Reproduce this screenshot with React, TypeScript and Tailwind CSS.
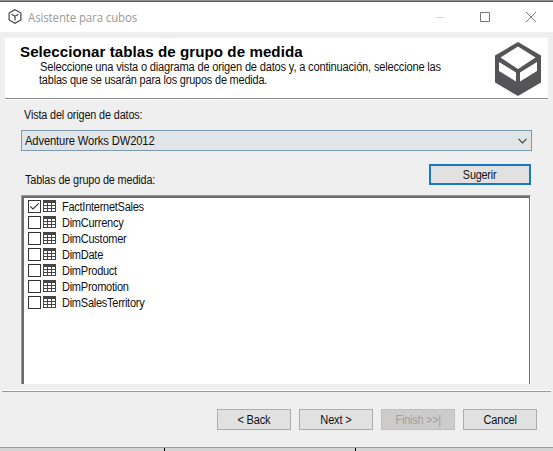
const tables = [
  'FactInternetSales',
  'DimCurrency',
  'DimCustomer',
  'DimDate',
  'DimProduct',
  'DimPromotion',
  'DimSalesTerritory',
];

function TableIcon() {
  return (
    <svg className="ml-[2px] h-[12px] w-[13px] shrink-0" viewBox="0 0 13 12" shapeRendering="crispEdges">
      <path fill="#454549" d="M0 0h13v12H0z" />
      <path
        fill="#fff"
        d="M1 3h3v2H1zM5 3h3v2H5zM9 3h3v2H9zM1 6h3v2H1zM5 6h3v2H5zM9 6h3v2H9zM1 9h3v2H1zM5 9h3v2H5zM9 9h3v2H9z"
      />
    </svg>
  );
}

function CheckBox({ checked }: { checked: boolean }) {
  return (
    <span className="flex h-[13px] w-[13px] shrink-0 items-center justify-center border border-[#333] bg-white">
      {checked && (
        <svg className="h-[11px] w-[11px]" viewBox="0 0 11 11" fill="none" stroke="#333" strokeWidth="1.2">
          <path d="M1.3 5.3 4 8 9.7 2.3" />
        </svg>
      )}
    </span>
  );
}

const button =
  'flex h-[21px] w-[74px] items-center justify-center border border-[#adadad] bg-[#e1e1e1] text-[12px] whitespace-pre';

export default function App() {
  return (
    <div className="flex h-[451px] w-[553px] flex-col overflow-hidden bg-[#efefef] font-['Liberation_Sans',Arial,sans-serif] text-[12px] leading-[14px] text-[#111]">
      <div className="h-[2px] shrink-0 border-b border-[#5c5c5c] bg-[#8f8f8f]" />
      <div className="flex h-[30px] shrink-0 items-center bg-white pl-[8px]">
        <svg className="-mt-[1px] h-[15px] w-[14px]" viewBox="0 0 14 15" fill="none" stroke="#444" strokeWidth="1.2">
          <path d="M7 .8 12.900 4v7L7 14.200 1.100 11V4zM3.500 5.300 7 7.300l3.500-2M7 7.300V11.500" />
        </svg>
        <span className="ml-[6px] mt-[1px] inline-block origin-left scale-x-[0.955] font-['Open_Sans',sans-serif] text-[12px] tracking-[-0.12px] text-[#999]">
          Asistente para cubos
        </span>
        <svg className="ml-auto mr-[16px] h-[12px] w-[102px]" viewBox="0 0 102 12" fill="none" stroke="#777">
          <path d="M0 6.500h10" stroke="#ddd" />
          <path d="M45.500 1.500h9v9h-9z" />
          <path d="m91 1 10 10M101 1 91 11" />
        </svg>
      </div>

      <div className="mx-[5px] mt-[6px] flex h-[61px] w-[543px] shrink-0 justify-between border-b border-[#8c8c8c] bg-white">
        <div className="w-[470px] pl-[15px] pt-[6px]">
          <h1 className="origin-left scale-x-[1.08] whitespace-nowrap text-[14px] font-bold leading-[16px] tracking-[0.05px] text-black">
            Seleccionar tablas de grupo de medida
          </h1>
          <p className="ml-[20px] mt-px origin-left scale-x-[0.924] whitespace-nowrap leading-[13px] tracking-[-0.2px]">
            Seleccione una vista o diagrama de origen de datos y, a continuación, seleccione las
          </p>
          <p className="ml-[19px] origin-left scale-x-[0.91] whitespace-nowrap leading-[13px] tracking-[-0.2px]">
            tablas que se usarán para los grupos de medida.
          </p>
        </div>
        <svg className="mr-[7px] mt-[4px] h-[54px] w-[46px]" viewBox="0 0 46 54">
          <path fill="#555557" d="M23 0 46 13.500v27L23 54 0 40.500v-27z" />
          <path fill="#fff" d="M23 4.500 40.500 15.500 23 27 5.500 15.500zM4 20l17 10.500v9L4 29zM42 20 25 30.500v9L42 29z" />
        </svg>
      </div>
      <div className="mx-[5px] h-px shrink-0 bg-white" />

      <div className="flex h-[284px] shrink-0 flex-col pl-[21px] pt-[8px]">
        <span className="ml-[3px] origin-left scale-x-[0.902] tracking-[-0.15px]">Vista del origen de datos:</span>
        <div className="mt-[8px] flex h-[21px] w-[511px] shrink-0 items-center justify-between border border-[#7d99ad] bg-[#e1e5e8] pl-[3px] pr-[4px]">
          <span className="origin-left scale-x-[0.935] tracking-[-0.15px]">Adventure Works DW2012</span>
          <svg className="h-[6px] w-[9px]" viewBox="0 0 9 6" fill="none" stroke="#444" strokeWidth="1.2">
            <path d="m.5.800 4 4 4-4" />
          </svg>
        </div>
        <div className="mt-[13px] flex h-[31px] w-[510px] shrink-0 justify-between">
          <span className="ml-[4px] mt-[9px] origin-left scale-x-[0.903] tracking-[-0.15px]">
            Tablas de grupo de medida:
          </span>
          <button className="flex h-[21px] w-[102px] items-center justify-center border-2 border-[#1778c4] bg-[#e1e1e1] tracking-[-0.2px]">
            <span className="scale-x-[0.9]">Sugerir</span>
          </button>
        </div>
        <div className="h-[189px] w-[510px] shrink-0 border-l border-r border-t border-l-[#999] border-r-[#fff] border-t-[#999] bg-white">
          <div className="h-[188px] border-l-2 border-r border-t-2 border-[#6c6c6c] pl-[4px] pt-px">
            {tables.map((name, i) => (
              <div key={name} className="flex h-[16px] items-start pt-px">
                <CheckBox checked={i === 0} />
                <TableIcon />
                <span className="ml-[6px] origin-left scale-x-[0.92] tracking-[-0.3px]">{name}</span>
              </div>
            ))}
          </div>
        </div>
      </div>

      <div className="mx-[2px] mt-[6px] h-[2px] shrink-0 border-b border-[#999] bg-white" />
      <div className="mt-[17px] flex shrink-0 gap-[8px] pl-[217px]">
        <button className={button}>
          <span className="scale-x-[0.92] tracking-[-0.2px]">{'< Back'}</span>
        </button>
        <button className={button}>
          <span className="scale-x-[0.92] tracking-[-0.2px]">{'Next >'}</span>
        </button>
        <button className="flex h-[21px] w-[74px] items-center justify-center border border-[#bfbfbf] bg-[#cccccc] text-[12px] tracking-[-0.2px] text-[#a0a0a0]">
          <span className="scale-x-[0.9]">{'Finish >>|'}</span>
        </button>
        <button className={button}>
          <span className="scale-x-[0.92] tracking-[-0.2px]">Cancel</span>
        </button>
      </div>
      <div className="mt-[17px] flex h-[4px] shrink-0 border-t border-[#999] bg-[#d4d4d4]">
        <span className="ml-[164px] h-full w-px bg-black" />
        <span className="ml-[190px] h-full w-px bg-black" />
      </div>
    </div>
  );
}
